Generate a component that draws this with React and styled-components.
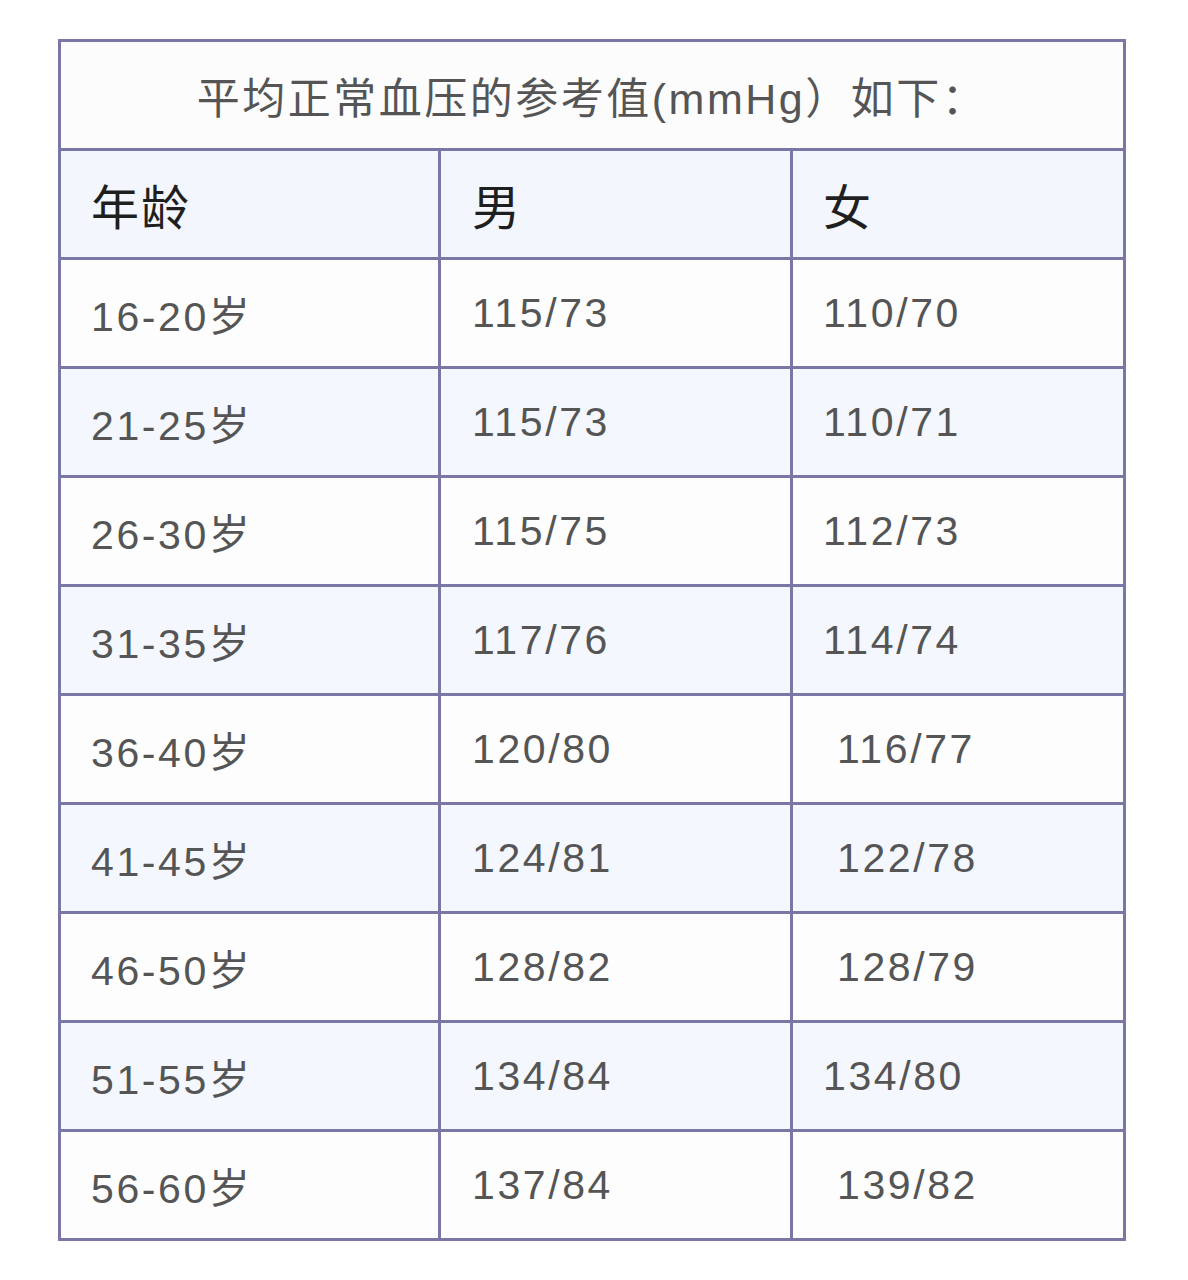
import React from "react";
import styled, { createGlobalStyle } from "styled-components";

const Global = createGlobalStyle`
  html, body { margin: 0; padding: 0; background: #ffffff; }
  body { font-family: "Liberation Sans", "Noto Sans CJK SC", sans-serif; }
`;

const Page = styled.div`
  padding: 39px 62px 40px 58px;
  background: #ffffff;
`;

const Table = styled.div`
  display: grid;
  grid-template-columns: 377px 349px 330px;
  grid-auto-rows: 106px;
  gap: 3px;
  padding: 3px;
  width: 1068px;
  box-sizing: border-box;
  background: #7a77a6;
`;

const Title = styled.div`
  grid-column: 1 / -1;
  display: flex;
  align-items: center;
  justify-content: center;
  background: #fcfcfd;
  color: #555555;
  font-size: 43px;
  letter-spacing: 2.5px;
`;

const Cell = styled.div`
  display: flex;
  align-items: center;
  padding-left: ${(p) => p.$pad || 30}px;
  background: ${(p) => (p.$head ? "#f3f7fd" : p.$alt ? "#f4f7fd" : "#fdfdfd")};
  color: ${(p) => (p.$head ? "#1f1f1f" : "#555555")};
  font-size: ${(p) => (p.$head ? 48 : 41)}px;
  letter-spacing: ${(p) => (p.$head ? 2 : 2.6)}px;
  white-space: pre;
`;

const rows = [
  ["16-20岁", "115/73", "110/70"],
  ["21-25岁", "115/73", "110/71"],
  ["26-30岁", "115/75", "112/73"],
  ["31-35岁", "117/76", "114/74"],
  ["36-40岁", "120/80", " 116/77"],
  ["41-45岁", "124/81", " 122/78"],
  ["46-50岁", "128/82", " 128/79"],
  ["51-55岁", "134/84", "134/80"],
  ["56-60岁", "137/84", " 139/82"],
];

export default function App() {
  return (
    <Page>
      <Global />
      <Table>
        <Title>平均正常血压的参考值(mmHg）如下：</Title>
        <Cell $head>年龄</Cell>
        <Cell $head $pad={31}>男</Cell>
        <Cell $head>女</Cell>
        {rows.map((r, i) => (
          <React.Fragment key={r[0]}>
            <Cell $alt={i % 2 === 1}>{r[0]}</Cell>
            <Cell $alt={i % 2 === 1} $pad={31}>{r[1]}</Cell>
            <Cell $alt={i % 2 === 1}>{r[2]}</Cell>
          </React.Fragment>
        ))}
      </Table>
    </Page>
  );
}
